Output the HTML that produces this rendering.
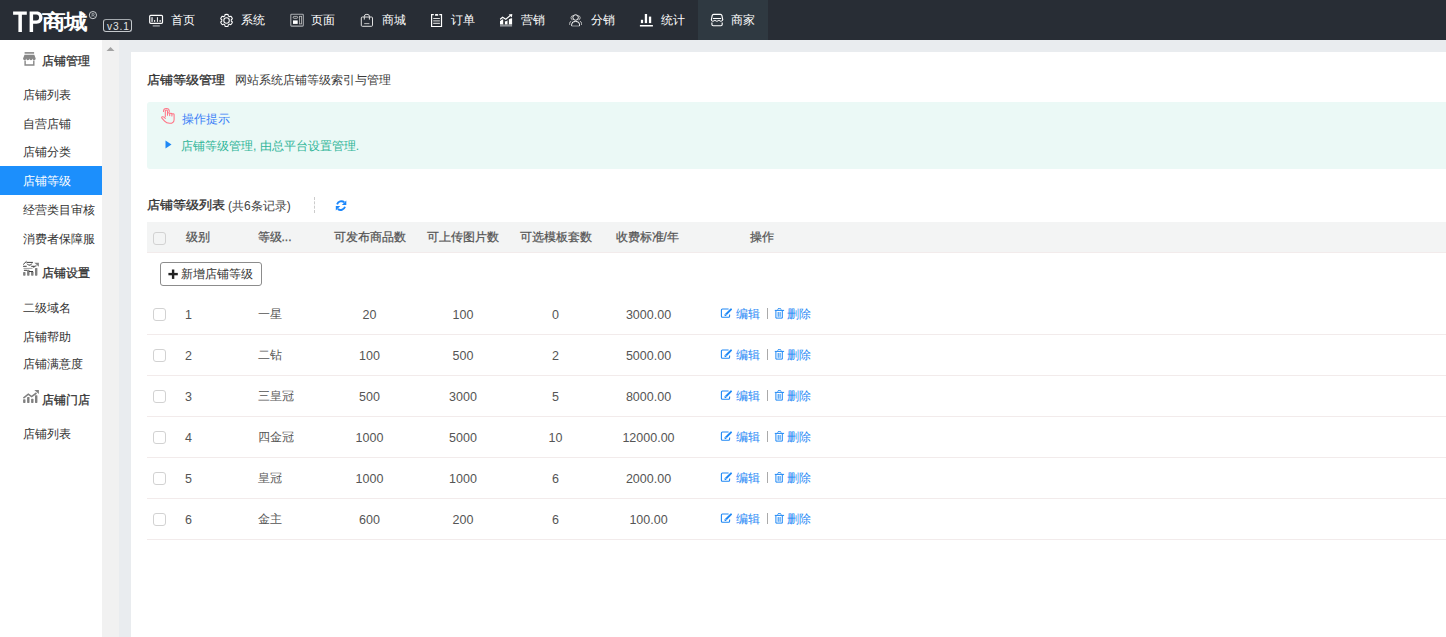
<!DOCTYPE html>
<html><head><meta charset="utf-8"><style>
*{margin:0;padding:0;box-sizing:border-box}
html,body{width:1446px;height:637px;overflow:hidden;background:#fff;font-family:"Liberation Sans",sans-serif;color:#333}
.a{position:absolute}
.t{position:absolute;white-space:nowrap;line-height:1;font-weight:500}
svg{position:absolute;overflow:visible}
</style></head><body>
<div class="a" style="left:0;top:0;width:1446px;height:40px;background:#282d35"></div>
<div class="a" style="left:698px;top:0;width:70px;height:40px;background:#2f3941"></div>
<div class="a" style="left:102px;top:40px;width:17px;height:597px;background:#f1f1f1"></div>
<div class="a" style="left:119px;top:40px;width:1327px;height:597px;background:#e9ecef"></div>
<div class="a" style="left:131px;top:52px;width:1315px;height:585px;background:#fff"></div>
<svg style="left:106px;top:46px" width="9" height="6"><path d="M0.5 5 L4.5 1 L8.5 5Z" fill="#a3a3a3"/></svg>
<svg style="left:0;top:0" width="100" height="40"><path fill="#fff" d="M13.1 11.4H26.8V14.7H21.9V32H18.4V14.7H13.1Z"/><path fill="#fff" fill-rule="evenodd" d="M29.6 11.4H36.6C40.3 11.4 42.5 13.8 42.5 17.5C42.5 21.2 40.3 23.7 36.6 23.7H33.1V32H29.6ZM33.1 14.6H36.3C38.1 14.6 39.1 15.7 39.1 17.5C39.1 19.3 38.1 20.5 36.3 20.5H33.1Z"/><circle cx="92.9" cy="15.1" r="3.6" fill="none" stroke="#d8dbde" stroke-width="0.9"/><path d="M92 13.4V16.8M92 13.4H93.4Q94.3 13.4 94.3 14.3Q94.3 15.1 93.4 15.1H92M93.4 15.1L94.3 16.8" stroke="#c8ccd0" stroke-width="0.6" fill="none"/></svg>
<div class="t" style="left:42px;top:11.9px;color:#fff;font-size:22.4px;font-weight:bold;letter-spacing:-0.6px;transform:scale(1.05,0.935);transform-origin:0 0">商城</div>
<div class="a" style="left:103px;top:19px;width:29px;height:13px;border:1px solid #c5c9cd;border-top-color:#a4a9ae;border-radius:3px"></div>
<div class="t" style="left:107px;top:21.6px;color:#e4e4e4;font-size:10.2px;letter-spacing:0.9px;font-weight:normal">v3.1</div>
<svg style="left:0;top:0" width="800" height="40"><rect x="149.7" y="15.3" width="12.8" height="8" rx="1" stroke="#fff" fill="none" stroke-width="1.2"/><rect x="151.3" y="17.2" width="1.5" height="4.7" fill="#cfd1d4"/><rect x="154" y="20" width="1.2" height="1.9" fill="#e0e0e0"/><rect x="156.9" y="17.2" width="1.1" height="4.7" fill="#e8e8e8"/><rect x="159.4" y="20" width="1.5" height="1.9" fill="#c0c2c5"/><rect x="152.7" y="25.2" width="7.1" height="1.4" fill="#9a9da2"/><path d="M224.98 14.61 A6.05 6.05 0 0 1 228.12 14.61 L228.25 16.02 A4.75 4.75 0 0 1 229.54 16.76 L230.83 16.17 A6.05 6.05 0 0 1 232.39 18.88 L231.24 19.71 A4.75 4.75 0 0 1 231.24 21.19 L232.39 22.02 A6.05 6.05 0 0 1 230.83 24.73 L229.54 24.14 A4.75 4.75 0 0 1 228.25 24.88 L228.12 26.29 A6.05 6.05 0 0 1 224.98 26.29 L224.85 24.88 A4.75 4.75 0 0 1 223.56 24.14 L222.27 24.73 A6.05 6.05 0 0 1 220.71 22.02 L221.86 21.19 A4.75 4.75 0 0 1 221.86 19.71 L220.71 18.88 A6.05 6.05 0 0 1 222.27 16.17 L223.56 16.76 A4.75 4.75 0 0 1 224.85 16.02Z" stroke="#fff" fill="none" stroke-width="1.05" stroke-linejoin="round"/><circle cx="226.55" cy="20.45" r="2.75" stroke="#fff" fill="none" stroke-width="1.05"/><rect x="290.8" y="14.3" width="12.5" height="11.8" rx="0.8" stroke="#a9acb0" fill="none" stroke-width="1.1"/><rect x="293.2" y="16.4" width="4.5" height="1.9" rx="0.95" stroke="#d0d0d0" fill="none" stroke-width="0.8"/><rect x="293" y="20.4" width="4.7" height="3.5" fill="#fff"/><rect x="299.5" y="16.3" width="2.1" height="7.6" stroke="#bfbfbf" fill="none" stroke-width="0.8"/><rect x="361.3" y="17" width="11.2" height="9.3" rx="1" stroke="#e0e0e0" fill="none" stroke-width="1"/><path d="M364.3 19.6V16.2Q364.3 14.3 366.9 14.3Q369.4 14.3 369.4 16.2V19.6" stroke="#e0e0e0" fill="none" stroke-width="1"/><rect x="364.2" y="23.2" width="5.2" height="0.9" fill="#ccc"/><path d="M433.8 14.6H431.6V26.5H441.5V14.6H439.3" stroke="#fff" fill="none" stroke-width="1.2"/><rect x="434.9" y="13.9" width="3.4" height="1.9" rx="0.9" fill="#fff"/><rect x="433.2" y="18" width="6.7" height="1" fill="#ddd"/><rect x="433.2" y="20.4" width="6.7" height="1" fill="#ddd"/><rect x="433.2" y="22.8" width="6.7" height="1" fill="#eee"/><rect x="500" y="19" width="3.4" height="5.6" fill="#fff"/><rect x="504.9" y="20.2" width="2.7" height="4.4" fill="#fff"/><rect x="509" y="18.3" width="3.1" height="6.3" fill="#fff"/><path d="M499.5 20.8L502.5 18.5L505.8 20.7L512.3 16.4" stroke="#282d35" stroke-width="1.2" fill="none"/><path d="M503.5 19.5V25M508.3 19.5V25" stroke="#555" stroke-width="0.9"/><rect x="500" y="24.5" width="12.1" height="2.1" fill="#8e9196"/><path d="M500.2 19.3L502.6 17.2L505.8 19.3L510.6 15.2" stroke="#fff" stroke-width="1.2" fill="none"/><path d="M512.3 13.9L508.6 14.4L511.9 17.6Z" fill="#fff"/><circle cx="575.6" cy="17.5" r="2.75" stroke="#fff" fill="none" stroke-width="1"/><path d="M571.7 26V24.2Q571.7 21.4 575.6 21.4Q579.5 21.4 579.5 24.2V26" stroke="#fff" fill="none" stroke-width="1"/><path d="M572.7 19.9Q570.9 19.5 571 17.7Q571.2 15.8 573 15.7M578.5 19.9Q580.3 19.5 580.2 17.7Q580 15.8 578.2 15.7M569.7 24.9V23.3Q569.7 21.7 571.3 21.2M581.5 24.9V23.3Q581.5 21.7 579.9 21.2" stroke="#d0d0d0" fill="none" stroke-width="0.85"/><rect x="571.7" y="25.5" width="7.8" height="1" fill="#909398"/><rect x="640.9" y="19.8" width="2.2" height="3.3" fill="#fff"/><rect x="644.8" y="14" width="2.3" height="9.1" fill="#fff"/><rect x="648.9" y="16.6" width="2.3" height="6.5" fill="#fff"/><rect x="639.9" y="25" width="13" height="1.5" fill="#fff"/><path d="M711.3 20.2L712.2 15.5Q712.5 14.4 713.6 14.4H720.5Q721.6 14.4 721.9 15.5L722.8 20.2" stroke="#fff" fill="none" stroke-width="1.15"/><rect x="713" y="18" width="8.1" height="1" fill="#fff"/><path d="M711 20.4Q712.9 22.2 714.9 20.4Q716.9 22.2 718.9 20.4Q720.9 22.2 722.9 20.4" stroke="#fff" fill="none" stroke-width="1"/><path d="M711.9 22.6V24.5Q711.9 25.7 713.2 25.7H720.9Q722.2 25.7 722.2 24.5V22.6" stroke="#fff" fill="none" stroke-width="1.15"/></svg>
<div class="t" style="left:171.0px;top:14.3px;color:#fff;font-size:12px;font-weight:500">首页</div>
<div class="t" style="left:241.2px;top:14.3px;color:#fff;font-size:12px;font-weight:500">系统</div>
<div class="t" style="left:311.0px;top:14.3px;color:#fff;font-size:12px;font-weight:500">页面</div>
<div class="t" style="left:381.7px;top:14.3px;color:#fff;font-size:12px;font-weight:500">商城</div>
<div class="t" style="left:450.9px;top:14.3px;color:#fff;font-size:12px;font-weight:500">订单</div>
<div class="t" style="left:521.1px;top:14.3px;color:#fff;font-size:12px;font-weight:500">营销</div>
<div class="t" style="left:591.1px;top:14.3px;color:#fff;font-size:12px;font-weight:500">分销</div>
<div class="t" style="left:660.8px;top:14.3px;color:#fff;font-size:12px;font-weight:500">统计</div>
<div class="t" style="left:730.8px;top:14.3px;color:#fff;font-size:12px;font-weight:500">商家</div>
<div class="t" style="left:42px;top:54.5px;font-size:12px;color:#333;font-weight:500;-webkit-text-stroke:0.3px #333;">店铺管理</div>
<div class="t" style="left:22.6px;top:88.6px;font-size:12px;color:#333;">店铺列表</div>
<div class="t" style="left:22.6px;top:117.8px;font-size:12px;color:#333;">自营店铺</div>
<div class="t" style="left:22.6px;top:146.3px;font-size:12px;color:#333;">店铺分类</div>
<div class="a" style="left:0;top:166px;width:102px;height:29px;background:#1c8ffc"></div>
<div class="t" style="left:22.6px;top:174.8px;font-size:12px;color:#fff;">店铺等级</div>
<div class="t" style="left:22.6px;top:203.7px;font-size:12px;color:#333;">经营类目审核</div>
<div class="t" style="left:22.6px;top:232.5px;font-size:12px;color:#333;">消费者保障服</div>
<div class="t" style="left:42px;top:266.8px;font-size:12px;color:#333;font-weight:500;-webkit-text-stroke:0.3px #333;">店铺设置</div>
<div class="t" style="left:22.6px;top:301.8px;font-size:12px;color:#333;">二级域名</div>
<div class="t" style="left:22.6px;top:330.8px;font-size:12px;color:#333;">店铺帮助</div>
<div class="t" style="left:22.6px;top:358.3px;font-size:12px;color:#333;">店铺满意度</div>
<div class="t" style="left:42px;top:393.6px;font-size:12px;color:#333;font-weight:500;-webkit-text-stroke:0.3px #333;">店铺门店</div>
<div class="t" style="left:22.6px;top:427.5px;font-size:12px;color:#333;">店铺列表</div>
<svg style="left:0;top:0" width="102" height="637"><rect x="24.6" y="52.1" width="9.5" height="1.6" fill="#888"/><path d="M24.5 54.8H34.3L35.7 58.6A1.58 1.58 0 0 1 32.54 58.6A1.58 1.58 0 0 1 29.38 58.6A1.58 1.58 0 0 1 26.22 58.6A1.58 1.58 0 0 1 23.06 58.6Z" fill="#888"/><path d="M25.1 60.6V65H33.8V60.6" stroke="#888" stroke-width="1.4" fill="none"/><rect x="23.1" y="399.3" width="2.4" height="3.599999999999966" rx="0.6" fill="#808080"/><rect x="27.1" y="397" width="2.4" height="5.899999999999977" rx="0.6" fill="#808080"/><rect x="31.1" y="398.8" width="2.4" height="4.099999999999966" rx="0.6" fill="#808080"/><rect x="35" y="395.2" width="2.4" height="7.699999999999989" rx="0.6" fill="#808080"/><path d="M23.4 398.2L28.3 394.2L31.6 396.6L36.5 393" stroke="#808080" stroke-width="1.6" fill="none"/><path d="M34.3 390H38.9V394Z" fill="#808080"/><rect x="23.1" y="272.1" width="2.4" height="3.599999999999966" rx="0.6" fill="#808080"/><rect x="27.1" y="269.8" width="2.4" height="5.899999999999977" rx="0.6" fill="#808080"/><rect x="31.1" y="271.6" width="2.4" height="4.099999999999966" rx="0.6" fill="#808080"/><rect x="35" y="268.0" width="2.4" height="7.699999999999989" rx="0.6" fill="#808080"/><path d="M33 267.5L36.5 265.5" stroke="#808080" stroke-width="1.4" fill="none"/><rect x="23.5" y="267.9" width="9" height="1.1" fill="#aaa"/><path d="M34.3 262.8H38.9V266.8Z" fill="#808080"/><path d="M23.2 264.5L26.5 261.3M26.5 262.4H32.9M27.1 263.7L28.5 265.1H30.5L31.8 263.5M23.1 266.3H26.7M31.2 266.3H34.6M23.9 270.3H27.1M29 271.5H33" stroke="#333" stroke-width="0.95" fill="none"/></svg>
<div class="t" style="left:147px;top:74.4px;font-size:13px;font-weight:500;-webkit-text-stroke:0.35px #333;color:#333;transform:scaleY(0.92);transform-origin:0 0">店铺等级管理</div>
<div class="t" style="left:235px;top:74px;font-size:12px;color:#3a3a3a">网站系统店铺等级索引与管理</div>
<div class="a" style="left:147px;top:102px;width:1299px;height:67px;background:#ebf9f6;border-radius:3px 0 0 3px"></div>
<div class="t" style="left:182px;top:112.9px;font-size:12.3px;color:#3a7ff6">操作提示</div>
<svg style="left:165px;top:140px" width="7" height="9"><path d="M0.5 0.5 L6.5 4.5 L0.5 8.5Z" fill="#1e88f5"/></svg>
<div class="t" style="left:181px;top:139.5px;font-size:12px;color:#2fb598">店铺等级管理, 由总平台设置管理.</div>
<svg style="left:0;top:0" width="400" height="300"><path d="M165.3 116.6V111.3Q165.3 110 166.4 110Q167.5 110 167.5 111.3V115.2M167.5 113.6Q167.5 112.7 168.6 112.7Q169.7 112.7 169.7 113.6V115.6M169.7 114.1Q169.7 113.2 170.8 113.2Q171.9 113.2 171.9 114.1V116M171.9 114.6Q171.9 113.7 173 113.7Q174.1 113.7 174.1 114.6V119.4Q174.1 123.3 169.6 123.3Q166.5 123.3 164.6 121.1L161.9 118.1Q161.3 117.3 162.2 116.8Q163.1 116.4 164 117.2L165.3 118.4M163.5 111.4Q163.5 108.5 166.4 108.5Q169.3 108.5 169.3 111.4" stroke="#ff7385" stroke-width="1.05" fill="none" stroke-linecap="round" stroke-linejoin="round"/><path d="M337.1 204.4A4.6 4.6 0 0 1 344.3 202.2" stroke="#1a86fb" stroke-width="1.9" fill="none"/><path d="M346.3 200.6V205.1H341.8Z" fill="#1a86fb"/><path d="M345 206.8A4.6 4.6 0 0 1 337.8 209" stroke="#1a86fb" stroke-width="1.9" fill="none"/><path d="M335.8 210.6V206.1H340.3Z" fill="#1a86fb"/></svg>
<div class="t" style="left:147px;top:199.2px;font-size:13px;font-weight:500;-webkit-text-stroke:0.35px #333;color:#333;transform:scaleY(0.92);transform-origin:0 0">店铺等级列表</div>
<div class="t" style="left:228px;top:199.5px;font-size:12px;color:#444">(共6条记录)</div>
<div class="a" style="left:314px;top:197px;width:1px;height:16px;border-left:1px dashed #ccc"></div>
<div class="a" style="left:147px;top:222px;width:1299px;height:30px;background:#f3f4f4"></div>
<div class="a" style="left:147px;top:252px;width:1299px;height:1px;background:#f2ebeb"></div>
<div class="a" style="left:153px;top:232px;width:13px;height:13px;border:1px solid #d2d2d2;border-radius:3px"></div>
<div class="t" style="left:185.6px;top:231.3px;font-size:12px;font-weight:500;-webkit-text-stroke:0.25px #555;color:#555">级别</div>
<div class="t" style="left:257.5px;top:231.3px;font-size:12px;font-weight:500;-webkit-text-stroke:0.25px #555;color:#555">等级...</div>
<div class="t" style="left:334px;top:231.3px;font-size:12px;font-weight:500;-webkit-text-stroke:0.25px #555;color:#555">可发布商品数</div>
<div class="t" style="left:427px;top:231.3px;font-size:12px;font-weight:500;-webkit-text-stroke:0.25px #555;color:#555">可上传图片数</div>
<div class="t" style="left:520px;top:231.3px;font-size:12px;font-weight:500;-webkit-text-stroke:0.25px #555;color:#555">可选模板套数</div>
<div class="t" style="left:615.6px;top:231.3px;font-size:12px;font-weight:500;-webkit-text-stroke:0.25px #555;color:#555">收费标准/年</div>
<div class="t" style="left:749.8px;top:231.3px;font-size:12px;font-weight:500;-webkit-text-stroke:0.25px #555;color:#555">操作</div>
<div class="a" style="left:160px;top:262px;width:102px;height:24px;border:1px solid #8c8c8c;border-radius:3px;background:#fff"></div>
<div class="t" style="left:181px;top:268.2px;font-size:12px;color:#333">新增店铺等级</div>
<svg style="left:0;top:0" width="300" height="300"><rect x="168.4" y="272.9" width="9.4" height="2.4" fill="#222"/><rect x="171.9" y="269.5" width="2.4" height="9.4" fill="#222"/></svg>
<div class="a" style="left:153px;top:307.5px;width:13px;height:13px;border:1px solid #d2d2d2;border-radius:3px"></div>
<div class="t" style="left:185px;top:309px;font-size:12.5px;color:#555">1</div>
<div class="t" style="left:257.5px;top:308px;font-size:12px;color:#555">一星</div>
<div class="t" style="left:319.5px;width:100px;text-align:center;top:309px;font-size:12.5px;color:#555">20</div>
<div class="t" style="left:413px;width:100px;text-align:center;top:309px;font-size:12.5px;color:#555">100</div>
<div class="t" style="left:505.5px;width:100px;text-align:center;top:309px;font-size:12.5px;color:#555">0</div>
<div class="t" style="left:598.5px;width:100px;text-align:center;top:309px;font-size:12.5px;color:#555">3000.00</div>
<div class="t" style="left:736px;top:308px;font-size:12px;color:#1e88f5">编辑</div>
<svg style="left:0;top:293px" width="800" height="41"><path d="M728.6 16H722.4Q721.4 16 721.4 17V23.3Q721.4 24.3 722.4 24.3H728.6Q729.6 24.3 729.6 23.3V21.6" stroke="#1e88f5" stroke-width="1.1" fill="none"/><path d="M725.4 22L731 16.4" stroke="#1e88f5" stroke-width="2" fill="none" stroke-linecap="round"/><path d="M725.5 21.9L726.4 21" stroke="#fff" stroke-width="0.7"/><path d="M774.8 17.4H784.1M777.6 16.6Q777.6 15.5 779.4 15.5Q781.2 15.5 781.2 16.6M775.9 17.6V25.1H782.3V17.6M778.2 19V23.8M780.1 19V23.8" stroke="#1e88f5" stroke-width="1" fill="none"/></svg>
<div class="a" style="left:767px;top:308px;width:1px;height:11px;background:#aaa"></div>
<div class="t" style="left:787px;top:308px;font-size:12px;color:#1e88f5">删除</div>
<div class="a" style="left:147px;top:334px;width:1299px;height:1px;background:#f2ebeb"></div>
<div class="a" style="left:153px;top:348.5px;width:13px;height:13px;border:1px solid #d2d2d2;border-radius:3px"></div>
<div class="t" style="left:185px;top:350px;font-size:12.5px;color:#555">2</div>
<div class="t" style="left:257.5px;top:349px;font-size:12px;color:#555">二钻</div>
<div class="t" style="left:319.5px;width:100px;text-align:center;top:350px;font-size:12.5px;color:#555">100</div>
<div class="t" style="left:413px;width:100px;text-align:center;top:350px;font-size:12.5px;color:#555">500</div>
<div class="t" style="left:505.5px;width:100px;text-align:center;top:350px;font-size:12.5px;color:#555">2</div>
<div class="t" style="left:598.5px;width:100px;text-align:center;top:350px;font-size:12.5px;color:#555">5000.00</div>
<div class="t" style="left:736px;top:349px;font-size:12px;color:#1e88f5">编辑</div>
<svg style="left:0;top:334px" width="800" height="41"><path d="M728.6 16H722.4Q721.4 16 721.4 17V23.3Q721.4 24.3 722.4 24.3H728.6Q729.6 24.3 729.6 23.3V21.6" stroke="#1e88f5" stroke-width="1.1" fill="none"/><path d="M725.4 22L731 16.4" stroke="#1e88f5" stroke-width="2" fill="none" stroke-linecap="round"/><path d="M725.5 21.9L726.4 21" stroke="#fff" stroke-width="0.7"/><path d="M774.8 17.4H784.1M777.6 16.6Q777.6 15.5 779.4 15.5Q781.2 15.5 781.2 16.6M775.9 17.6V25.1H782.3V17.6M778.2 19V23.8M780.1 19V23.8" stroke="#1e88f5" stroke-width="1" fill="none"/></svg>
<div class="a" style="left:767px;top:349px;width:1px;height:11px;background:#aaa"></div>
<div class="t" style="left:787px;top:349px;font-size:12px;color:#1e88f5">删除</div>
<div class="a" style="left:147px;top:375px;width:1299px;height:1px;background:#f2ebeb"></div>
<div class="a" style="left:153px;top:389.5px;width:13px;height:13px;border:1px solid #d2d2d2;border-radius:3px"></div>
<div class="t" style="left:185px;top:391px;font-size:12.5px;color:#555">3</div>
<div class="t" style="left:257.5px;top:390px;font-size:12px;color:#555">三皇冠</div>
<div class="t" style="left:319.5px;width:100px;text-align:center;top:391px;font-size:12.5px;color:#555">500</div>
<div class="t" style="left:413px;width:100px;text-align:center;top:391px;font-size:12.5px;color:#555">3000</div>
<div class="t" style="left:505.5px;width:100px;text-align:center;top:391px;font-size:12.5px;color:#555">5</div>
<div class="t" style="left:598.5px;width:100px;text-align:center;top:391px;font-size:12.5px;color:#555">8000.00</div>
<div class="t" style="left:736px;top:390px;font-size:12px;color:#1e88f5">编辑</div>
<svg style="left:0;top:375px" width="800" height="41"><path d="M728.6 16H722.4Q721.4 16 721.4 17V23.3Q721.4 24.3 722.4 24.3H728.6Q729.6 24.3 729.6 23.3V21.6" stroke="#1e88f5" stroke-width="1.1" fill="none"/><path d="M725.4 22L731 16.4" stroke="#1e88f5" stroke-width="2" fill="none" stroke-linecap="round"/><path d="M725.5 21.9L726.4 21" stroke="#fff" stroke-width="0.7"/><path d="M774.8 17.4H784.1M777.6 16.6Q777.6 15.5 779.4 15.5Q781.2 15.5 781.2 16.6M775.9 17.6V25.1H782.3V17.6M778.2 19V23.8M780.1 19V23.8" stroke="#1e88f5" stroke-width="1" fill="none"/></svg>
<div class="a" style="left:767px;top:390px;width:1px;height:11px;background:#aaa"></div>
<div class="t" style="left:787px;top:390px;font-size:12px;color:#1e88f5">删除</div>
<div class="a" style="left:147px;top:416px;width:1299px;height:1px;background:#f2ebeb"></div>
<div class="a" style="left:153px;top:430.5px;width:13px;height:13px;border:1px solid #d2d2d2;border-radius:3px"></div>
<div class="t" style="left:185px;top:432px;font-size:12.5px;color:#555">4</div>
<div class="t" style="left:257.5px;top:431px;font-size:12px;color:#555">四金冠</div>
<div class="t" style="left:319.5px;width:100px;text-align:center;top:432px;font-size:12.5px;color:#555">1000</div>
<div class="t" style="left:413px;width:100px;text-align:center;top:432px;font-size:12.5px;color:#555">5000</div>
<div class="t" style="left:505.5px;width:100px;text-align:center;top:432px;font-size:12.5px;color:#555">10</div>
<div class="t" style="left:598.5px;width:100px;text-align:center;top:432px;font-size:12.5px;color:#555">12000.00</div>
<div class="t" style="left:736px;top:431px;font-size:12px;color:#1e88f5">编辑</div>
<svg style="left:0;top:416px" width="800" height="41"><path d="M728.6 16H722.4Q721.4 16 721.4 17V23.3Q721.4 24.3 722.4 24.3H728.6Q729.6 24.3 729.6 23.3V21.6" stroke="#1e88f5" stroke-width="1.1" fill="none"/><path d="M725.4 22L731 16.4" stroke="#1e88f5" stroke-width="2" fill="none" stroke-linecap="round"/><path d="M725.5 21.9L726.4 21" stroke="#fff" stroke-width="0.7"/><path d="M774.8 17.4H784.1M777.6 16.6Q777.6 15.5 779.4 15.5Q781.2 15.5 781.2 16.6M775.9 17.6V25.1H782.3V17.6M778.2 19V23.8M780.1 19V23.8" stroke="#1e88f5" stroke-width="1" fill="none"/></svg>
<div class="a" style="left:767px;top:431px;width:1px;height:11px;background:#aaa"></div>
<div class="t" style="left:787px;top:431px;font-size:12px;color:#1e88f5">删除</div>
<div class="a" style="left:147px;top:457px;width:1299px;height:1px;background:#f2ebeb"></div>
<div class="a" style="left:153px;top:471.5px;width:13px;height:13px;border:1px solid #d2d2d2;border-radius:3px"></div>
<div class="t" style="left:185px;top:473px;font-size:12.5px;color:#555">5</div>
<div class="t" style="left:257.5px;top:472px;font-size:12px;color:#555">皇冠</div>
<div class="t" style="left:319.5px;width:100px;text-align:center;top:473px;font-size:12.5px;color:#555">1000</div>
<div class="t" style="left:413px;width:100px;text-align:center;top:473px;font-size:12.5px;color:#555">1000</div>
<div class="t" style="left:505.5px;width:100px;text-align:center;top:473px;font-size:12.5px;color:#555">6</div>
<div class="t" style="left:598.5px;width:100px;text-align:center;top:473px;font-size:12.5px;color:#555">2000.00</div>
<div class="t" style="left:736px;top:472px;font-size:12px;color:#1e88f5">编辑</div>
<svg style="left:0;top:457px" width="800" height="41"><path d="M728.6 16H722.4Q721.4 16 721.4 17V23.3Q721.4 24.3 722.4 24.3H728.6Q729.6 24.3 729.6 23.3V21.6" stroke="#1e88f5" stroke-width="1.1" fill="none"/><path d="M725.4 22L731 16.4" stroke="#1e88f5" stroke-width="2" fill="none" stroke-linecap="round"/><path d="M725.5 21.9L726.4 21" stroke="#fff" stroke-width="0.7"/><path d="M774.8 17.4H784.1M777.6 16.6Q777.6 15.5 779.4 15.5Q781.2 15.5 781.2 16.6M775.9 17.6V25.1H782.3V17.6M778.2 19V23.8M780.1 19V23.8" stroke="#1e88f5" stroke-width="1" fill="none"/></svg>
<div class="a" style="left:767px;top:472px;width:1px;height:11px;background:#aaa"></div>
<div class="t" style="left:787px;top:472px;font-size:12px;color:#1e88f5">删除</div>
<div class="a" style="left:147px;top:498px;width:1299px;height:1px;background:#f2ebeb"></div>
<div class="a" style="left:153px;top:512.5px;width:13px;height:13px;border:1px solid #d2d2d2;border-radius:3px"></div>
<div class="t" style="left:185px;top:514px;font-size:12.5px;color:#555">6</div>
<div class="t" style="left:257.5px;top:513px;font-size:12px;color:#555">金主</div>
<div class="t" style="left:319.5px;width:100px;text-align:center;top:514px;font-size:12.5px;color:#555">600</div>
<div class="t" style="left:413px;width:100px;text-align:center;top:514px;font-size:12.5px;color:#555">200</div>
<div class="t" style="left:505.5px;width:100px;text-align:center;top:514px;font-size:12.5px;color:#555">6</div>
<div class="t" style="left:598.5px;width:100px;text-align:center;top:514px;font-size:12.5px;color:#555">100.00</div>
<div class="t" style="left:736px;top:513px;font-size:12px;color:#1e88f5">编辑</div>
<svg style="left:0;top:498px" width="800" height="41"><path d="M728.6 16H722.4Q721.4 16 721.4 17V23.3Q721.4 24.3 722.4 24.3H728.6Q729.6 24.3 729.6 23.3V21.6" stroke="#1e88f5" stroke-width="1.1" fill="none"/><path d="M725.4 22L731 16.4" stroke="#1e88f5" stroke-width="2" fill="none" stroke-linecap="round"/><path d="M725.5 21.9L726.4 21" stroke="#fff" stroke-width="0.7"/><path d="M774.8 17.4H784.1M777.6 16.6Q777.6 15.5 779.4 15.5Q781.2 15.5 781.2 16.6M775.9 17.6V25.1H782.3V17.6M778.2 19V23.8M780.1 19V23.8" stroke="#1e88f5" stroke-width="1" fill="none"/></svg>
<div class="a" style="left:767px;top:513px;width:1px;height:11px;background:#aaa"></div>
<div class="t" style="left:787px;top:513px;font-size:12px;color:#1e88f5">删除</div>
<div class="a" style="left:147px;top:539px;width:1299px;height:1px;background:#f2ebeb"></div>
</body></html>
